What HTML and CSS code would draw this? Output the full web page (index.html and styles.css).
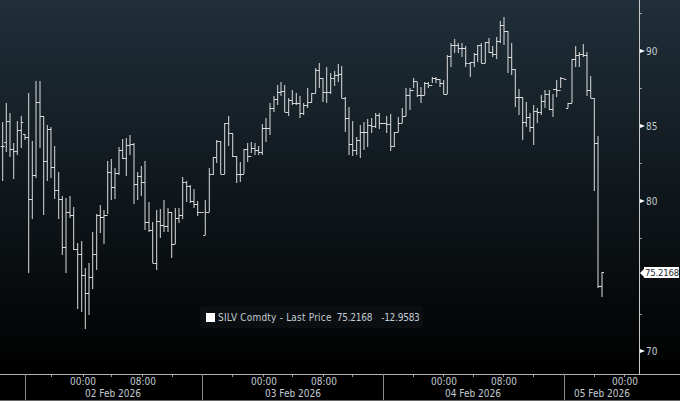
FILE: index.html
```html
<!DOCTYPE html>
<html lang="en">
<head>
<meta charset="utf-8">
<title>SILV Comdty</title>
<link rel="stylesheet" href="styles.css">
</head>
<body>
<main class="chart">
  <div class="plot">
    <div class="canvas">
      <svg class="bars" width="639" height="374" viewBox="0 0 639 374" aria-hidden="true"><path id="ohlc" class="ohlc"/></svg>
      <div class="legend"><span class="swatch"></span><span class="legend-name">SILV Comdty - Last Price</span><span class="legend-last">75.2168</span><span class="legend-change">-12.9583</span></div>
    </div>
    <div class="yaxis">
      <i class="minor" style="top:13px"></i>
      <i class="major" style="top:51px"></i><span class="ylabel" style="top:51px">90</span>
      <i class="minor" style="top:88px"></i>
      <i class="major" style="top:126px"></i><span class="ylabel" style="top:126px">85</span>
      <i class="minor" style="top:163px"></i>
      <i class="major" style="top:201px"></i><span class="ylabel" style="top:201px">80</span>
      <i class="minor" style="top:238px"></i>
      <i class="minor" style="top:314px"></i>
      <i class="major" style="top:351px"></i><span class="ylabel" style="top:351px">70</span>
      <div class="last-tag" style="top:272px"><span>75.2168</span></div>
    </div>
  </div>
  <div class="xaxis">
    <i class="sep" style="left:25px"></i><i class="sep" style="left:202px"></i><i class="sep" style="left:383px"></i><i class="sep" style="left:564px"></i>
    <i class="xtick" style="left:51px"></i><i class="xtick" style="left:83px"></i><i class="xtick" style="left:111px"></i><i class="xtick" style="left:142px"></i><i class="xtick" style="left:172px"></i><i class="xtick" style="left:232px"></i><i class="xtick" style="left:263px"></i><i class="xtick" style="left:292px"></i><i class="xtick" style="left:323px"></i><i class="xtick" style="left:352px"></i><i class="xtick" style="left:413px"></i><i class="xtick" style="left:443px"></i><i class="xtick" style="left:473px"></i><i class="xtick" style="left:503px"></i><i class="xtick" style="left:533px"></i><i class="xtick" style="left:594px"></i><i class="xtick" style="left:624px"></i>
    <span class="time" style="left:83px">00:00</span><span class="time" style="left:143px">08:00</span>
    <span class="time" style="left:264px">00:00</span><span class="time" style="left:324px">08:00</span>
    <span class="time" style="left:444px">00:00</span><span class="time" style="left:504px">08:00</span>
    <span class="time" style="left:625px">00:00</span>
    <span class="date" style="left:113px">02 Feb 2026</span><span class="date" style="left:293px">03 Feb 2026</span><span class="date" style="left:473px">04 Feb 2026</span><span class="date" style="left:602px">05 Feb 2026</span>
  </div>
</main>
<script src="chart.js"></script>
</body>
</html>
```
FILE: styles.css
```css
* { box-sizing: border-box; }
html, body { margin: 0; background: #000; }
body { font-family: "DejaVu Sans", "Liberation Sans", sans-serif; font-stretch: condensed; font-size: 10px; color: #c2ccd2; }
.chart { width: 680px; height: 401px; display: flex; flex-direction: column; overflow: hidden; }
.plot { height: 374px; display: flex; background: linear-gradient(#202f39, #000); }
.canvas { width: 639px; position: relative; }
.bars { display: block; }
.ohlc { fill: none; stroke: #dcdcdc; stroke-width: 1; }
.legend { position: absolute; left: 200px; top: 306px; width: 223px; height: 22px; padding-left: 6px; display: flex; align-items: center; background: #0c0f12; border-radius: 3px; white-space: nowrap; }
.swatch { width: 9px; height: 9px; margin-right: 3px; background: #fff; }
.legend-name { letter-spacing: 0.2px; }
.legend-last { margin-left: 5px; letter-spacing: -0.25px; }
.legend-change { margin-left: 9px; letter-spacing: -0.25px; }
.yaxis { flex: 1; position: relative; border-left: 1px solid #c8c8c8; }
.minor { position: absolute; left: 0; width: 2px; height: 1px; background: #999; }
.major { position: absolute; left: 0; width: 0; height: 0; margin-top: -2px; border-left: 5px solid #fff; border-top: 2.5px solid transparent; border-bottom: 2.5px solid transparent; }
.ylabel { position: absolute; left: 6px; line-height: 12px; margin-top: -5px; }
.last-tag { position: absolute; left: 0; height: 11px; margin-top: -5px; display: flex; align-items: center; }
.last-tag::before { content: ""; border-right: 4px solid #fff; border-top: 4px solid transparent; border-bottom: 4px solid transparent; }
.last-tag span { background: #fff; color: #1c2a33; font-size: 9.5px; line-height: 11px; padding: 0 0 0 1px; letter-spacing: -0.2px; white-space: nowrap; }
.xaxis { height: 27px; position: relative; background: #000; border-top: 1px solid #b4b4b4; border-bottom: 1px solid #666; }
.sep { position: absolute; top: -1px; bottom: 0; width: 1px; background: #8a8a8a; }
.xtick { position: absolute; top: 0; width: 1px; height: 2px; background: #999; }
.time, .date { position: absolute; transform: translateX(-50%); line-height: 12px; white-space: nowrap; }
.time { top: 1px; }
.date { top: 13px; }
```
FILE: chart.js
```js
var bars = [
[2.7,122,181,146,146],[6.3,103,152,142,121],[10,113,157,121,149],[13.7,143,179,149,151],[17.3,121,155,151,130],[21.3,116,148,130,122],[25,134,140,134,137],[28.7,93,273,137,199],
[32.3,141,219,199,175],[36,81,178,175,102],[40,81,148,102,116],[43.7,116,215,116,161],[47.3,125,181,161,129],[51,127,178,129,167],[54.7,146,199,167,190],[58.7,172,219,190,199],
[62.3,196,255,199,247],[66,198,273,247,212],[70,196,218,212,215],[73.7,207,250,215,249],[77.7,243,309,249,254],[81.7,241,312,254,275],[85.3,268,329,275,293],[89,263,315,293,277],
[92.7,232,289,277,254],[96.7,214,270,254,215],[100.3,205,233,215,217],[104,210,244,217,215],[107.7,161,214,215,172],[111.3,159,200,172,187],[115,168,199,187,173],[119,147,175,173,150],
[122.7,139,159,150,158],[126.3,138,176,158,145],[130,135,155,145,144],[134,143,204,144,184],[137.7,172,200,184,176],[141.3,166,196,176,182],[145,161,230,182,222],[149,202,232,222,230],
[152.7,222,263,230,263],[156.7,210,270,263,221],[160.3,209,238,221,225],[164,200,232,225,226],[168,208,232,226,212],[171.7,212,258,212,244],[175.3,208,244,244,218],[179,208,223,218,215],
[182.7,177,219,215,182],[186.7,181,202,182,186],[190.3,185,203,186,201],[194,189,208,201,204],[197.7,201,216,204,212],[201.7,212,212,212,212],[205.3,200,235,235,212],[209.3,168,212,212,174],
[213.3,157,175,174,157],[216.7,140,163,157,141],[220.7,141,174,141,174],[224.7,123,174,174,123],[228.7,116,146,123,133],[232.7,133,157,133,156],[236.7,156,183,156,174],[240.3,162,182,174,174],
[244,149,174,174,149],[247.7,143,162,149,156],[251.3,142,153,156,148],[255,143,155,148,150],[258.7,146,155,150,152],[262.3,124,155,152,128],[266,118,142,128,128],[270,103,135,128,108],
[274,96,112,108,99],[277.7,85,105,99,92],[281,82,96,92,91],[284.7,85,112,91,112],[288.7,98,116,112,100],[292.3,90,105,100,103],[296.3,93,105,103,103],[300,96,118,103,113],
[303.7,103,115,113,105],[307.7,88,108,105,102],[311.7,93,103,102,93],[315.7,68,93,93,70],[319.3,63,88,70,78],[323,78,102,78,92],[326.7,67,103,92,92],[330.7,73,94,92,78],
[334.7,71,86,78,75],[338.3,64,82,75,74],[341.7,66,98,74,98],[345.3,97,132,98,118],[349,107,155,118,144],[352.7,121,156,144,150],[356.7,137,155,150,140],[360.3,125,158,140,132],
[364,122,150,132,132],[367.7,119,147,132,125],[371.7,118,133,125,126],[375.7,113,128,126,115],[379.3,113,129,115,123],[383,123,123,123,123],[386.7,116,133,123,124],[390.7,114,151,124,146],
[394.3,132,147,146,132],[398.3,117,132,132,123],[402.3,108,123,123,116],[406,88,116,116,95],[410,88,110,95,90],[413.7,78,88,90,81],[417.3,82,97,81,95],[421,87,103,95,95],
[424.7,82,95,95,83],[428.3,82,88,83,85],[432.3,77,83,85,78],[436,77,83,78,79],[440,79,87,79,83],[443.7,80,94,83,94],[447.3,55,94,94,56],[451,43,67,56,45],
[454.7,39,53,45,45],[458.3,43,53,45,48],[462,43,57,48,48],[465.7,46,67,48,63],[470.3,62,77,63,62],[474.3,53,67,62,54],[477.7,45,62,54,45],[481.3,43,63,45,63],
[485.3,42,63,63,42],[489,38,53,42,52],[492.7,46,57,52,54],[496.7,37,59,54,41],[500.3,21,43,41,25],[504,17,45,25,31],[508,31,73,31,57],[511.7,43,75,57,69],
[515.3,69,107,69,97],[519,89,115,97,97],[522.7,97,140,97,122],[526.3,102,127,122,117],[530,113,132,117,127],[533.7,105,145,127,111],[537.3,108,123,111,112],[541.3,95,115,112,101],
[545,90,108,101,94],[549.3,90,110,94,109],[553,94,117,109,89],[556.7,80,97,89,90],[560.7,77,88,90,78],[564.3,78,78,78,79],[568,103,108,108,103],[572,59,103,103,59],
[575.7,46,67,59,55],[579.3,52,67,55,54],[583.3,44,57,54,55],[587,52,96,55,90],[590.7,76,98,90,98],[594.3,98,191,98,143],[598,136,288,143,286],[602,272,297,286,272]
];
var d = bars.map(function (b) {
  var x = b[0];
  var v = b[1] === b[2] ? "" : "M" + x + " " + b[1] + "V" + b[2];
  return v + "M" + (x - 2) + " " + (b[3] + 0.5) + "H" + x + "M" + x + " " + (b[4] + 0.5) + "H" + (x + 2);
}).join("");
document.getElementById("ohlc").setAttribute("d", d);
```
